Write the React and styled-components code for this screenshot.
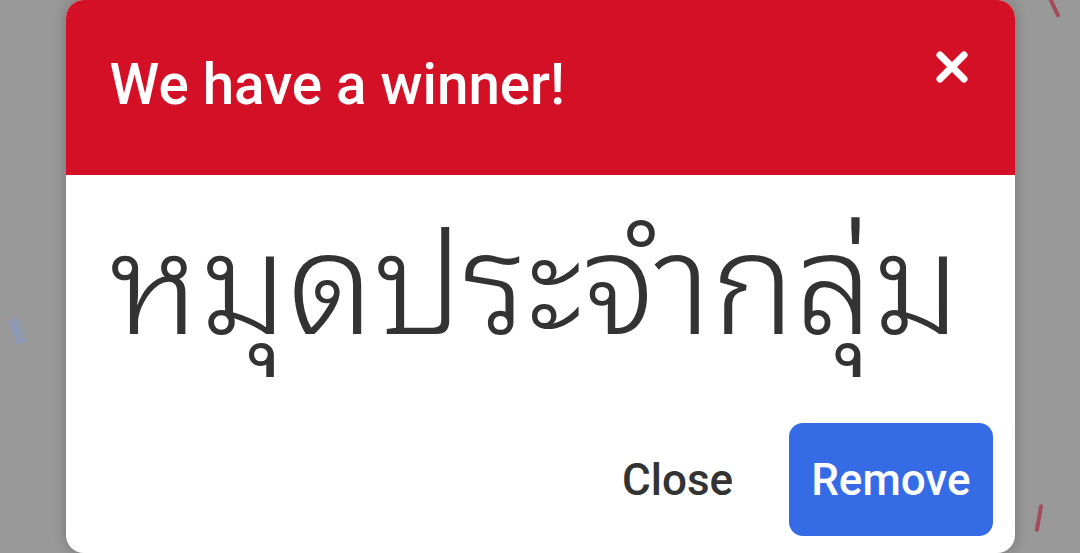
import React from 'react';
import styled, { createGlobalStyle } from 'styled-components';

const GlobalStyle = createGlobalStyle`
  html, body {
    margin: 0;
    padding: 0;
    background: #999999;
    font-family: Roboto, "Noto Sans", sans-serif;
  }
`;

export default function App() {
  return (
    <>
      <GlobalStyle />
      <Backdrop>
        <Confetti $left={12} $top={318} $w={10} $h={26} $rot={-20} $color="#8a9ab8" />
        <Confetti $left={1052} $top={-4} $w={4} $h={22} $rot={-25} $color="#a33a4a" />
        <Confetti $left={1037} $top={504} $w={4} $h={28} $rot={10} $color="#a33a4a" />
        <Modal>
          <Header>
            <Title>We have a winner!</Title>
            <CloseIcon aria-label="close">
              <svg width="34" height="34" viewBox="0 0 34 34">
                <path
                  d="M5 5 L29 29 M29 5 L5 29"
                  stroke="#fff"
                  strokeWidth="7"
                  strokeLinecap="round"
                />
              </svg>
            </CloseIcon>
          </Header>
          <Body>
            <Winner>หมุดประจำกลุ่ม</Winner>
          </Body>
          <Footer>
            <Button>Close</Button>
            <Button $primary>Remove</Button>
          </Footer>
        </Modal>
      </Backdrop>
    </>
  );
}

const Backdrop = styled.div`
  position: relative;
  height: 553px;
  overflow: hidden;
  display: flex;
  justify-content: center;
`;

const Confetti = styled.div`
  position: absolute;
  left: ${(p) => p.$left}px;
  top: ${(p) => p.$top}px;
  width: ${(p) => p.$w}px;
  height: ${(p) => p.$h}px;
  background: ${(p) => p.$color};
  transform: rotate(${(p) => p.$rot}deg);
  border-radius: 2px;
  opacity: 0.8;
`;

const Modal = styled.div`
  width: 949px;
  height: 553px;
  background: #fff;
  border-radius: 18px;
  overflow: hidden;
  display: flex;
  flex-direction: column;
  box-shadow: 0 0 14px rgba(0, 0, 0, 0.25);
`;

const Header = styled.div`
  height: 175px;
  flex-shrink: 0;
  background: #d41027;
  display: flex;
  justify-content: space-between;
  align-items: flex-start;
  padding: 0 46px 0 44px;
  box-sizing: border-box;
`;

const Title = styled.h1`
  margin: 53px 0 0;
  color: #fff;
  font-family: Roboto, sans-serif;
  font-weight: 500;
  font-size: 56.5px;
  line-height: 64px;
`;

const CloseIcon = styled.button`
  margin-top: 50px;
  padding: 0;
  border: none;
  background: none;
  display: flex;
  cursor: pointer;
`;

const Body = styled.div`
  flex: 1;
  padding: 0 30px 0 44px;
`;

const Winner = styled.div`
  margin-top: 16px;
  color: #333333;
  font-family: "Noto Sans Thai Looped", "Noto Sans Thai", sans-serif;
  font-weight: 350;
  font-size: 140px;
  line-height: 160px;
  white-space: nowrap;
`;

const Footer = styled.div`
  display: flex;
  justify-content: flex-end;
  align-items: center;
  padding: 0 22px 17px;
`;

const Button = styled.button`
  height: 113px;
  padding: 0 22px;
  margin-left: ${(p) => (p.$primary ? '34px' : '0')};
  border: none;
  border-radius: 14px;
  background: ${(p) => (p.$primary ? '#366be6' : 'transparent')};
  color: ${(p) => (p.$primary ? '#fff' : '#333333')};
  font-family: Roboto, sans-serif;
  font-weight: 500;
  font-size: 44px;
  cursor: pointer;
`;
